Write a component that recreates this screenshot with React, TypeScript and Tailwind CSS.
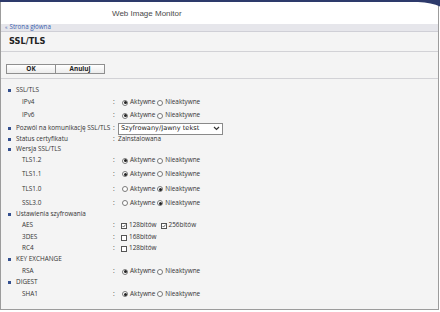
import React from "react";

type Row =
  | { kind: "head"; label: string; h: string }
  | { kind: "radio"; label: string; h: string; on: boolean }
  | { kind: "check"; label: string; h: string; opts: { text: string; on: boolean }[] };

const Radio = ({ on }: { on: boolean }) => (
  <span className="w-[6px] h-[6px] rounded-full border border-[#7a7a7a] bg-white flex items-center justify-center shrink-0">
    {on && <span className="w-[3px] h-[3px] rounded-full bg-[#222]" />}
  </span>
);

const Check = ({ on }: { on: boolean }) => (
  <span className="w-[6px] h-[6px] border border-[#555] bg-white flex items-center justify-center shrink-0">
    {on && (
      <svg width="6" height="6" viewBox="0 0 6 6">
        <path d="M0.8 3 L2.4 4.6 L5.4 0.8" stroke="#222" strokeWidth="1" fill="none" />
      </svg>
    )}
  </span>
);

const Bullet = () => <span className="w-[3px] h-[3px] bg-[#34508f] mr-[5px] shrink-0" />;

const Colon = () => <span className="w-[8px] shrink-0">:</span>;

const RadioPair = ({ on }: { on: boolean }) => (
  <div className="flex items-center ml-[1px]">
    <Radio on={on} />
    <span className="ml-[2px] mr-[2px]">Aktywne</span>
    <Radio on={!on} />
    <span className="ml-[2px]">Nieaktywne</span>
  </div>
);

const SubRow = ({ h, label, children }: { h: string; label: string; children: React.ReactNode }) => (
  <div className={"flex items-center " + h}>
    <span className="w-[112px] pl-[21px] shrink-0">{label}</span>
    <Colon />
    {children}
  </div>
);

const HeadRow = ({ h, label }: { h: string; label: string }) => (
  <div className={"flex items-center pl-[7px] " + h}>
    <Bullet />
    <span>{label}</span>
  </div>
);

export default function App() {
  return (
    <div className="w-[440px] h-[312px] bg-white relative overflow-hidden font-['Open_Sans',sans-serif] text-[6.4px] text-[#333] leading-none">
      <div className="h-[2px] bg-[#2d3a6b]" />
      <svg className="absolute top-0 right-0" width="22" height="8" viewBox="0 0 22 8">
        <path d="M0 0 L22 0 L22 6.5 Q14 2.5 0 2 Z" fill="#2d3a6b" />
      </svg>
      <div className="w-[439px] h-[308px] border-l border-r border-b border-[#9c9c9c] flex flex-col">
        {/* header */}
        <div className="h-[22px] flex items-center pl-[111px] pt-[1px] font-['Liberation_Sans',Arial,sans-serif] text-[8px] text-[#4a4a4a]">
          Web Image Monitor
        </div>
        <div className="h-[8px] bg-[#e6e6eb] border-b border-[#cfcfd6] flex items-center pl-[4px] text-[6.2px] text-[#3a5fb0]">
          <span className="mr-[2px] text-[5px]">«</span>Strona główna
        </div>

        <div className="flex-1 bg-[#f4f4f4] flex flex-col">
          {/* title */}
          <div className="h-[20px] border-b border-[#d2d2d6] flex items-center pl-[8px] font-['DejaVu_Sans',sans-serif] font-bold text-[8.2px] text-[#222]">
            SSL/TLS
          </div>

          {/* buttons */}
          <div className="h-[27px] border-b border-[#d2d2d6] pt-[12px] pl-[5px] flex items-start">
            <button className="w-[50px] h-[10px] bg-gradient-to-b from-white to-[#ececec] border border-[#8f8f8f] font-bold text-[6.4px] text-[#222] flex items-center justify-center">
              OK
            </button>
            <button className="w-[49px] h-[10px] bg-gradient-to-b from-white to-[#ececec] border border-l-0 border-[#8f8f8f] font-bold text-[6.4px] text-[#222] flex items-center justify-center">
              Anuluj
            </button>
          </div>

          {/* rows */}
          <div className="pt-[5px] flex flex-col">
            <HeadRow h="h-[12px]" label="SSL/TLS" />
            <SubRow h="h-[13px]" label="IPv4">
              <RadioPair on={true} />
            </SubRow>
            <SubRow h="h-[13px]" label="IPv6">
              <RadioPair on={true} />
            </SubRow>
            <div className="flex items-center h-[13px] pl-[7px]">
              <Bullet />
              <span className="w-[97px] shrink-0">Pozwól na komunikację SSL/TLS</span>
              <span className="w-[5px] shrink-0">:</span>
              <div className="w-[105px] h-[12px] bg-white border border-[#8a8a8a] flex items-center justify-between pl-[2px] pr-[2px] font-['DejaVu_Sans',sans-serif] text-[6.6px] text-[#222]">
                <span>Szyfrowany/Jawny tekst</span>
                <svg width="7" height="5" viewBox="0 0 7 5">
                  <path d="M1 1 L3.5 3.5 L6 1" stroke="#333" strokeWidth="1.2" fill="none" />
                </svg>
              </div>
            </div>
            <div className="flex items-center h-[9px] pl-[7px]">
              <Bullet />
              <span className="w-[97px] shrink-0">Status certyfikatu</span>
              <span className="w-[5px] shrink-0">:</span>
              <span>Zainstalowana</span>
            </div>
            <HeadRow h="h-[11px]" label="Wersja SSL/TLS" />
            <SubRow h="h-[11px]" label="TLS1.2">
              <RadioPair on={true} />
            </SubRow>
            <SubRow h="h-[16px]" label="TLS1.1">
              <RadioPair on={true} />
            </SubRow>
            <SubRow h="h-[14px]" label="TLS1.0">
              <RadioPair on={false} />
            </SubRow>
            <SubRow h="h-[14px]" label="SSL3.0">
              <RadioPair on={false} />
            </SubRow>
            <HeadRow h="h-[9px]" label="Ustawienia szyfrowania" />
            <SubRow h="h-[13px]" label="AES">
              <div className="flex items-center">
                <Check on={true} />
                <span className="ml-[2px] mr-[4px]">128bitów</span>
                <Check on={true} />
                <span className="ml-[2px]">256bitów</span>
              </div>
            </SubRow>
            <SubRow h="h-[11px]" label="3DES">
              <div className="flex items-center">
                <Check on={false} />
                <span className="ml-[2px]">168bitów</span>
              </div>
            </SubRow>
            <SubRow h="h-[11px]" label="RC4">
              <div className="flex items-center">
                <Check on={false} />
                <span className="ml-[2px]">128bitów</span>
              </div>
            </SubRow>
            <HeadRow h="h-[11px]" label="KEY EXCHANGE" />
            <SubRow h="h-[13px]" label="RSA">
              <RadioPair on={true} />
            </SubRow>
            <HeadRow h="h-[9px]" label="DIGEST" />
            <SubRow h="h-[14px]" label="SHA1">
              <RadioPair on={true} />
            </SubRow>
          </div>
        </div>
      </div>
    </div>
  );
}
